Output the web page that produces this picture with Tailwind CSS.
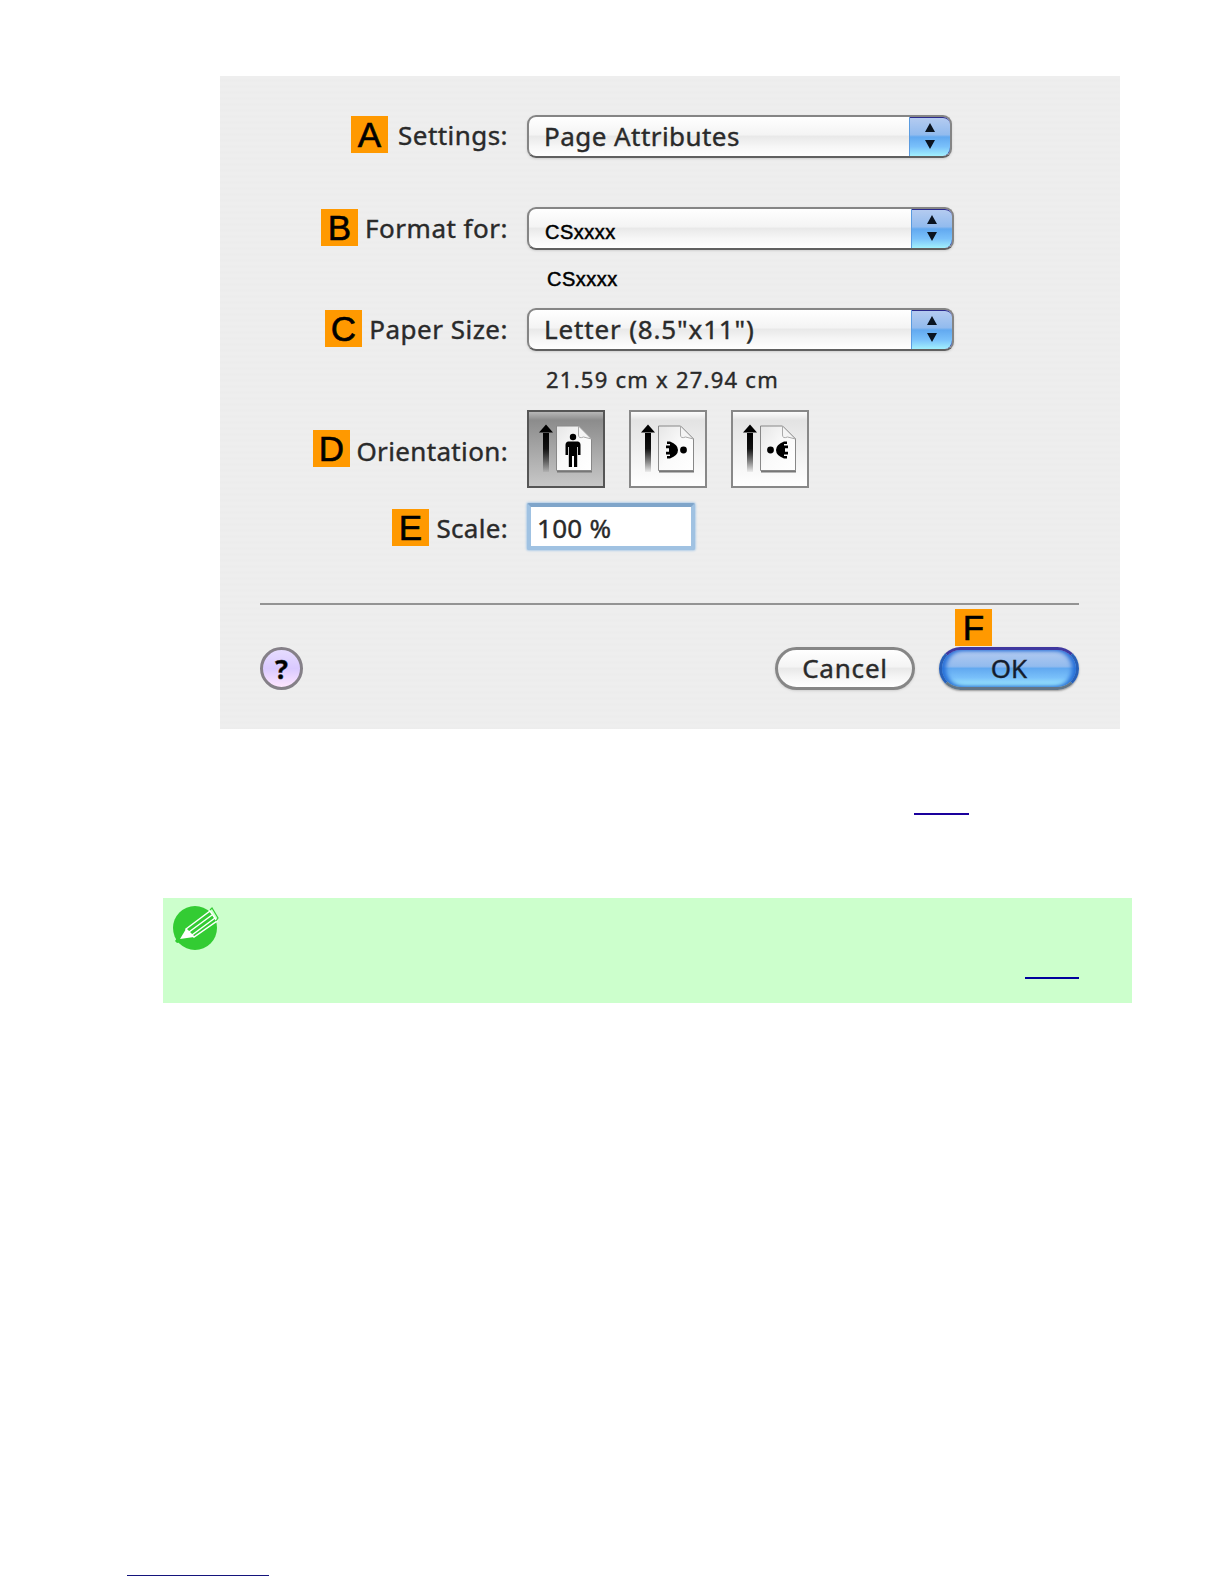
<!DOCTYPE html>
<html lang="en">
<head>
    <meta charset="UTF-8">
    <meta name="viewport" content="width=device-width, initial-scale=1.0">
    <title>Page Setup</title>
    <script src="https://cdn.jsdelivr.net/npm/@tailwindcss/browser@4"></script>
    <style>
        .stripes {
            background: repeating-linear-gradient(#eeeeee 0, #eeeeee 3px, #ececec 4px, #ededed 6px);
        }
        .gel {
            background: linear-gradient(#ffffff 0, #f4f4f4 45%, #e9e9e9 50%, #f6f6f6 75%, #ffffff 100%);
        }
        .gel-blue {
            background: linear-gradient(#b4cbf0 0, #92bbee 44%, #62a9f0 50%, #79c0fa 75%, #a2f0fd 100%);
        }
    </style>
</head>
<body class="bg-white w-[1224px] h-[1584px] overflow-hidden font-['Noto_Sans',sans-serif] text-[#2a2a2a] [-webkit-text-stroke:0.4px_#2a2a2a]">
    <!-- Dialog -->
    <div class="stripes ml-[220px] mt-[76px] w-[900px] h-[653px] flex flex-col">
        <!-- Settings -->
        <div class="flex h-[43px] mt-[39px]">
            <div class="w-[288px] flex justify-end">
                <span class="w-[37px] h-[37px] mt-px bg-[#ff9900] text-black text-[35px] leading-[38px] text-center font-['Liberation_Sans',sans-serif] [-webkit-text-stroke:0.6px_black]">A</span>
                <span class="w-[120px] text-right text-[26px] leading-[41px] whitespace-nowrap tracking-[0.45px]">Settings:</span>
            </div>
            <div class="gel ml-[19px] w-[425px] h-[43px] flex justify-between rounded-[9px] border-2 border-[#858585] border-b-[#606060] shadow-sm overflow-hidden">
                <span class="pl-[15px] text-[26px] leading-[39px] tracking-[0.45px]">Page Attributes</span>
                <span class="gel-blue w-[43px] -mt-0.5 -mr-0.5 border-t-[3px] border-r-2 border-[#2b2b8c] border-l border-l-[#5a9be0] flex items-center justify-center rounded-r-[9px]">
                    <svg width="10" height="28" viewBox="0 0 10 28"><path d="M5 0L10 9H0zM0 17H10L5 26z" fill="#0b1420"/></svg>
                </span>
            </div>
        </div>
        <!-- Format for -->
        <div class="flex h-[43px] mt-[49px]">
            <div class="w-[288px] flex justify-end">
                <span class="w-[37px] h-[37px] mt-[2px] bg-[#ff9900] text-black text-[35px] leading-[38px] text-center font-['Liberation_Sans',sans-serif] [-webkit-text-stroke:0.6px_black]">B</span>
                <span class="w-[150px] text-right text-[26px] leading-[42px] whitespace-nowrap tracking-[0.5px]">Format for:</span>
            </div>
            <div class="gel ml-[19px] w-[427px] h-[43px] flex justify-between rounded-[9px] border-2 border-[#858585] border-b-[#606060] shadow-sm overflow-hidden">
                <span class="pl-4 text-[20px] leading-[46px] tracking-[0.5px] font-['Liberation_Sans',sans-serif] text-black [-webkit-text-stroke:0.5px_black]">CSxxxx</span>
                <span class="gel-blue w-[43px] -mt-0.5 -mr-0.5 border-t-[3px] border-r-2 border-[#2b2b8c] border-l border-l-[#5a9be0] flex items-center justify-center rounded-r-[9px]">
                    <svg width="10" height="28" viewBox="0 0 10 28"><path d="M5 0L10 9H0zM0 17H10L5 26z" fill="#0b1420"/></svg>
                </span>
            </div>
        </div>
        <div class="h-[24px] mt-[17px] pl-[327px] text-[20px] leading-[24px] tracking-[0.5px] font-['Liberation_Sans',sans-serif] text-black [-webkit-text-stroke:0.5px_black]">CSxxxx</div>
        <!-- Paper size -->
        <div class="flex h-[43px] mt-[17px]">
            <div class="w-[288px] flex justify-end">
                <span class="w-[37px] h-[37px] mt-[2px] bg-[#ff9900] text-black text-[35px] leading-[38px] text-center font-['Liberation_Sans',sans-serif] [-webkit-text-stroke:0.6px_black]">C</span>
                <span class="w-[146px] text-right text-[26px] leading-[43px] whitespace-nowrap tracking-[0.5px]">Paper Size:</span>
            </div>
            <div class="gel ml-[19px] w-[427px] h-[43px] flex justify-between rounded-[9px] border-2 border-[#858585] border-b-[#606060] shadow-sm overflow-hidden">
                <span class="pl-[15px] text-[26px] leading-[39px] tracking-[0.85px]">Letter (8.5"x11")</span>
                <span class="gel-blue w-[43px] -mt-0.5 -mr-0.5 border-t-[3px] border-r-2 border-[#2b2b8c] border-l border-l-[#5a9be0] flex items-center justify-center rounded-r-[9px]">
                    <svg width="10" height="28" viewBox="0 0 10 28"><path d="M5 0L10 9H0zM0 17H10L5 26z" fill="#0b1420"/></svg>
                </span>
            </div>
        </div>
        <div class="h-[30px] mt-[13px] pl-[326px] text-[22px] leading-[30px] tracking-[1.25px]">21.59 cm x 27.94 cm</div>
        <!-- Orientation -->
        <div class="flex h-[78px] mt-[16px]">
            <div class="w-[288px] flex justify-end pt-5">
                <span class="w-[37px] h-[37px] bg-[#ff9900] text-black text-[35px] leading-[38px] text-center font-['Liberation_Sans',sans-serif] [-webkit-text-stroke:0.6px_black]">D</span>
                <span class="w-[158px] text-right text-[26px] leading-[42px] whitespace-nowrap tracking-[0.35px]">Orientation:</span>
            </div>
            <div class="flex ml-[19px] gap-6">
                <svg width="78" height="78" viewBox="0 0 78 78">
                    <defs>
                        <linearGradient id="dark" x2="0" y2="1"><stop offset="0" stop-color="#bcbcbc"/><stop offset=".12" stop-color="#8c8c8c"/><stop offset="1" stop-color="#c8c8c8"/></linearGradient>
                        <linearGradient id="light" x2="0" y2="1"><stop offset="0" stop-color="#ffffff"/><stop offset=".12" stop-color="#e3e3e3"/><stop offset="1" stop-color="#ffffff"/></linearGradient>
                        <linearGradient id="shaft" x2="0" y2="1"><stop offset="0" stop-color="#000"/><stop offset=".4" stop-color="#111"/><stop offset="1" stop-color="#000" stop-opacity=".05"/></linearGradient>
                        <linearGradient id="paper" x2="1" y2="1"><stop offset="0" stop-color="#e6e6e6"/><stop offset=".5" stop-color="#fafafa"/><stop offset="1" stop-color="#fff"/></linearGradient>
                        <g id="sheet">
                            <path d="M16 23h6v39h-6z" fill="url(#shaft)"/>
                            <path d="M19 14.500l7 8h-14z" fill="#000"/>
                            <path d="M30 17h23l12 12v33.500h-35z" fill="#777"/>
                            <path d="M29.500 16h22l13 13v31.500h-35z" fill="url(#paper)" stroke="#888"/>
                            <path d="M51.500 16v9q0 4 5 2l8 2z" fill="#f4f4f4" stroke="#aaa"/>
                        </g>
                        <g id="man">
                            <circle cx="0" cy="-13" r="3.200"/>
                            <path d="M-5-8.500H5Q7.500-8 7.500-5V5H5V-3H4.200V17H1V6H-1V17H-4.200V-3H-5V5H-7.500V-5Q-7.500-8-5-8.500z"/>
                        </g>
                    </defs>
                    <rect x="1" y="1" width="76" height="76" fill="url(#dark)" stroke="#555" stroke-width="2"/>
                    <use href="#sheet"/>
                    <use href="#man" x="46" y="40"/>
                </svg>
                <svg width="78" height="78" viewBox="0 0 78 78">
                    <rect x="1" y="1" width="76" height="76" fill="url(#light)" stroke="#888" stroke-width="2"/>
                    <use href="#sheet"/>
                    <g id="side"><circle cx="54.500" cy="40" r="3.400"/><path d="M38 31.500h3q8 3 8 8.500t-8 8.500h-3v-2.500h3v-1.500h-4v-2.800h3v-3.400h-3v-2.800h4v-1.500h-3z"/></g>
                </svg>
                <svg width="78" height="78" viewBox="0 0 78 78">
                    <rect x="1" y="1" width="76" height="76" fill="url(#light)" stroke="#888" stroke-width="2"/>
                    <use href="#sheet"/>
                    <use href="#side" transform="translate(94 0) scale(-1 1)"/>
                </svg>
            </div>
        </div>
        <!-- Scale -->
        <div class="flex h-[50px] mt-[13px]">
            <div class="w-[288px] flex justify-end pt-2">
                <span class="w-[37px] h-[37px] bg-[#ff9900] text-black text-[35px] leading-[38px] text-center font-['Liberation_Sans',sans-serif] [-webkit-text-stroke:0.6px_black]">E</span>
                <span class="w-[79px] text-right text-[26px] leading-[39px] whitespace-nowrap tracking-[0.3px]">Scale:</span>
            </div>
            <div class="ml-[19px] mt-[2px] w-[168px] h-[47px] bg-white border-4 border-[#a0c2e2] border-t-[#7fa5ca] rounded-[2px] shadow-[0_0_2px_1px_#b4cfe8] pl-[6px] text-[26px] leading-[42px] tracking-[0.3px]">100 %</div>
        </div>
        <div class="mt-[52px] ml-[40px] mr-[41px] h-[2px] bg-[#939393]"></div>
        <!-- Buttons -->
        <div class="relative flex mt-[42px] pl-[40px] pr-[41px]">
            <button class="w-[43px] h-[43px] rounded-full border-[3px] border-[#858088] bg-linear-to-b from-[#e6dcff] via-[#d9c9ff] to-[#ffe6ff] font-bold text-[27px] leading-[34px] text-black">?</button>
            <button class="gel ml-auto w-[140px] h-[43px] rounded-full border-[3px] border-[#868686] shadow-sm text-[26px] leading-[35px] tracking-[0.8px]">Cancel</button>
            <button class="gel-blue ml-6 w-[140px] h-[43px] rounded-full border-[3px] border-t-[#4038a0] border-x-[#2860b8] border-b-[#627586] shadow-[inset_4px_0_4px_#2870d8,inset_-4px_0_4px_#2870d8,0_1px_2px_#999] text-[26px] leading-[35px] text-[#101c30]">OK</button>
            <span class="absolute left-[735px] -top-[38px] w-[37px] h-[37px] bg-[#ff9900] text-black text-[35px] leading-[38px] text-center font-['Liberation_Sans',sans-serif] [-webkit-text-stroke:0.6px_black]">F</span>
        </div>
    </div>

    <!-- Link underline -->
    <div class="mt-[84px] ml-[914px] w-[55px] h-[2px] bg-[#1a009c]"></div>

    <!-- Note -->
    <div class="mt-[83px] ml-[163px] w-[969px] h-[105px] bg-[#ccffcc] flex justify-between">
        <svg class="mt-[7px] ml-[9px]" width="48" height="46" viewBox="0 0 48 46">
            <circle cx="23" cy="23" r="22" fill="#33cc33"/>
            <path d="M3 36l2-3 5 4-5 1z" fill="#33cc33"/>
            <path d="M8 34L14 24 22 32z" fill="#fff"/>
            <path d="M14 24L38 6l7 10L22 32z" fill="#33cc33" stroke="#fff" stroke-width="1.500"/>
            <path d="M17 27L40 10M20 30L43 13" stroke="#fff" stroke-width="1.500"/>
            <path d="M38 5l2-2 6 10-2 3" fill="none" stroke="#33cc33" stroke-width="1.200"/>
        </svg>
        <div class="mt-[79px] mr-[53px] w-[54px] h-[2px] bg-[#00009c]"></div>
    </div>

    <!-- Footer underline -->
    <div class="mt-[572px] ml-[127px] w-[142px] h-px bg-[#14147c]"></div>
</body>
</html>
